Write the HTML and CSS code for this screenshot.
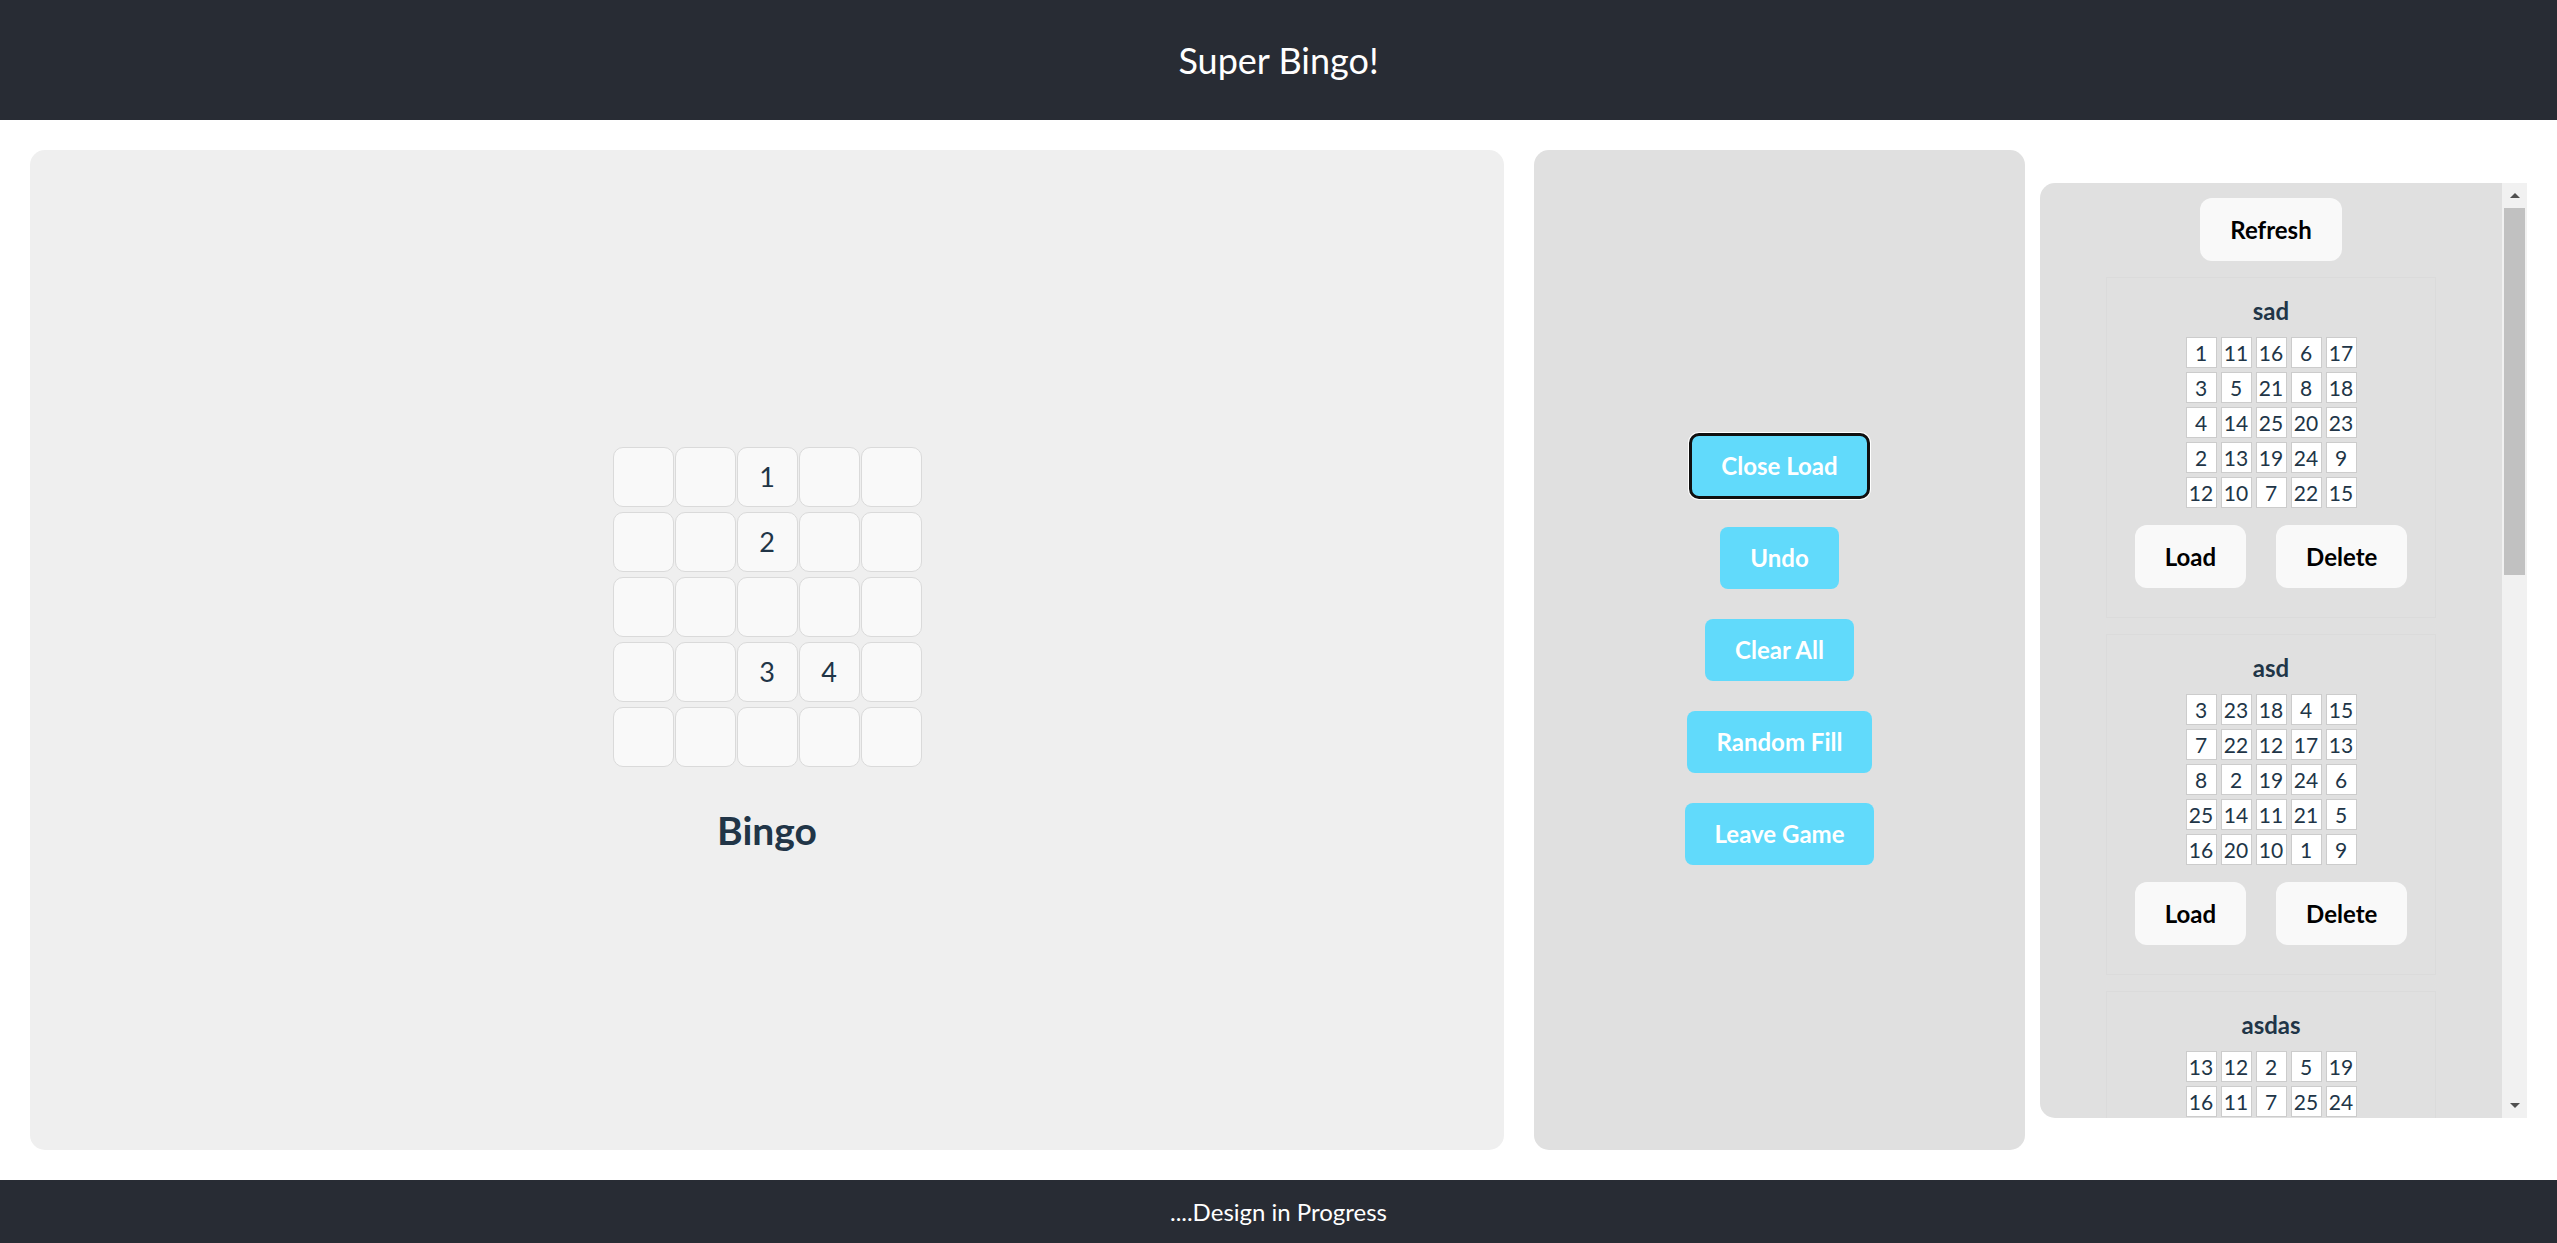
FILE: index.html
```html
<!DOCTYPE html>
<html lang="en">
<head>
<meta charset="utf-8">
<title>Super Bingo!</title>
<link rel="stylesheet" href="styles.css">
</head>
<body>
<header class="topbar">Super Bingo!</header>
<main class="layout">
  <section class="board-panel">
    <div class="board">
      <div class="cell"></div><div class="cell"></div><div class="cell">1</div><div class="cell"></div><div class="cell"></div>
      <div class="cell"></div><div class="cell"></div><div class="cell">2</div><div class="cell"></div><div class="cell"></div>
      <div class="cell"></div><div class="cell"></div><div class="cell"></div><div class="cell"></div><div class="cell"></div>
      <div class="cell"></div><div class="cell"></div><div class="cell">3</div><div class="cell">4</div><div class="cell"></div>
      <div class="cell"></div><div class="cell"></div><div class="cell"></div><div class="cell"></div><div class="cell"></div>
    </div>
    <h2 class="board-title">Bingo</h2>
  </section>
  <section class="controls">
    <button class="action focused">Close Load</button>
    <button class="action">Undo</button>
    <button class="action">Clear All</button>
    <button class="action">Random Fill</button>
    <button class="action">Leave Game</button>
  </section>
  <section class="saved">
    <div class="saved-list">
      <button class="light-btn">Refresh</button>
      <div class="card">
        <h3 class="card-title">sad</h3>
        <div class="mini">
          <span>1</span><span>11</span><span>16</span><span>6</span><span>17</span>
          <span>3</span><span>5</span><span>21</span><span>8</span><span>18</span>
          <span>4</span><span>14</span><span>25</span><span>20</span><span>23</span>
          <span>2</span><span>13</span><span>19</span><span>24</span><span>9</span>
          <span>12</span><span>10</span><span>7</span><span>22</span><span>15</span>
        </div>
        <div class="card-actions"><button class="light-btn">Load</button><button class="light-btn">Delete</button></div>
      </div>
      <div class="card">
        <h3 class="card-title">asd</h3>
        <div class="mini">
          <span>3</span><span>23</span><span>18</span><span>4</span><span>15</span>
          <span>7</span><span>22</span><span>12</span><span>17</span><span>13</span>
          <span>8</span><span>2</span><span>19</span><span>24</span><span>6</span>
          <span>25</span><span>14</span><span>11</span><span>21</span><span>5</span>
          <span>16</span><span>20</span><span>10</span><span>1</span><span>9</span>
        </div>
        <div class="card-actions"><button class="light-btn">Load</button><button class="light-btn">Delete</button></div>
      </div>
      <div class="card">
        <h3 class="card-title">asdas</h3>
        <div class="mini">
          <span>13</span><span>12</span><span>2</span><span>5</span><span>19</span>
          <span>16</span><span>11</span><span>7</span><span>25</span><span>24</span>
          <span>1</span><span>20</span><span>3</span><span>9</span><span>14</span>
          <span>22</span><span>6</span><span>18</span><span>10</span><span>4</span>
          <span>8</span><span>17</span><span>23</span><span>15</span><span>21</span>
        </div>
        <div class="card-actions"><button class="light-btn">Load</button><button class="light-btn">Delete</button></div>
      </div>
    </div>
    <div class="scrollbar">
      <div class="sb-btn"><span class="arrow-up"></span></div>
      <div class="sb-track"><div class="sb-thumb"></div></div>
      <div class="sb-btn"><span class="arrow-down"></span></div>
    </div>
  </section>
</main>
<footer class="bottombar">....Design in Progress</footer>
</body>
</html>
```
FILE: styles.css
```css
* { box-sizing: border-box; }

html, body {
  margin: 0;
  height: 100%;
}

body {
  display: flex;
  flex-direction: column;
  font-family: Lato, "Open Sans", "Liberation Sans", sans-serif;
  color: #213547;
  background: #ffffff;
}

.topbar {
  height: 120px;
  flex: 0 0 120px;
  background: #282c34;
  color: #ffffff;
  font-size: 36px;
  display: flex;
  align-items: center;
  justify-content: center;
}

.layout {
  flex: 1;
  min-height: 0;
  display: flex;
  padding: 30px;
  align-items: stretch;
}

.board-panel {
  flex: 1474 1 0;
  background: #efefef;
  border-radius: 15px;
  display: flex;
  flex-direction: column;
  align-items: center;
  justify-content: center;
}

.board {
  display: grid;
  grid-template-columns: repeat(5, 61px);
  grid-auto-rows: 60px;
  column-gap: 1px;
  row-gap: 5px;
}

.cell {
  background: #f9f9f9;
  border: 1px solid #dadada;
  border-radius: 10px;
  display: flex;
  align-items: center;
  justify-content: center;
  font-size: 27px;
  color: #213547;
}

.board-title {
  margin: 39px 0 0;
  font-size: 39px;
  line-height: 48px;
  font-weight: 700;
  color: #213547;
}

.controls {
  flex: 491 1 0;
  margin-left: 30px;
  background: #e0e0e0;
  border-radius: 15px;
  display: flex;
  flex-direction: column;
  align-items: center;
  justify-content: center;
  gap: 30px;
}

.action {
  font-family: inherit;
  font-size: 24px;
  font-weight: 700;
  line-height: 32px;
  padding: 15px 30px;
  border: none;
  border-radius: 8px;
  background: #61dafb;
  color: #ffffff;
}

.action.focused {
  outline: 3px solid #101010;
  outline-offset: -1px;
  box-shadow: 0 0 0 3px #ffffff;
}

.saved {
  flex: 487 1 0;
  margin-left: 15px;
  align-self: center;
  height: 935px;
  overflow: hidden;
  background: #e0e0e0;
  border-radius: 15px 0 0 15px;
  display: flex;
}

.saved-list {
  flex: 1;
  min-width: 0;
  overflow: hidden;
  display: flex;
  flex-direction: column;
  align-items: center;
  padding-top: 15px;
}

.scrollbar {
  flex: 0 0 25px;
  background: #f1f1f1;
  display: flex;
  flex-direction: column;
}

.sb-btn {
  flex: 0 0 25px;
  display: flex;
  align-items: center;
  justify-content: center;
}

.arrow-up {
  width: 0;
  height: 0;
  border-left: 5px solid transparent;
  border-right: 5px solid transparent;
  border-bottom: 5px solid #505050;
}

.arrow-down {
  width: 0;
  height: 0;
  border-left: 5px solid transparent;
  border-right: 5px solid transparent;
  border-top: 5px solid #505050;
}

.sb-track {
  flex: 1;
  padding: 0 2px;
}

.sb-thumb {
  height: 367px;
  background: #c1c1c1;
}

.light-btn {
  flex: 0 0 auto;
  font-family: inherit;
  font-size: 24px;
  font-weight: 700;
  line-height: 33px;
  padding: 15px 30px;
  border: none;
  border-radius: 12px;
  background: #f9f9f9;
  color: #000000;
}

.card {
  flex: 0 0 auto;
  width: 330px;
  margin-top: 16px;
  border: 1px solid #dbdbdb;
  padding: 17px 0 29px;
  display: flex;
  flex-direction: column;
  align-items: center;
}

.card-title {
  margin: 0 0 10px;
  font-size: 24px;
  line-height: 32px;
  font-weight: 700;
  color: #213547;
}

.mini {
  display: grid;
  grid-template-columns: repeat(5, 31px);
  grid-auto-rows: 31px;
  gap: 4px;
}

.mini span {
  background: #ffffff;
  border: 1px solid #cccccc;
  display: flex;
  align-items: center;
  justify-content: center;
  font-size: 21px;
  color: #213547;
}

.card-actions {
  margin-top: 17px;
  display: flex;
  gap: 30px;
}

.bottombar {
  flex: 0 0 63px;
  height: 63px;
  background: #282c34;
  color: #ffffff;
  font-size: 24px;
  display: flex;
  align-items: center;
  justify-content: center;
}
```
